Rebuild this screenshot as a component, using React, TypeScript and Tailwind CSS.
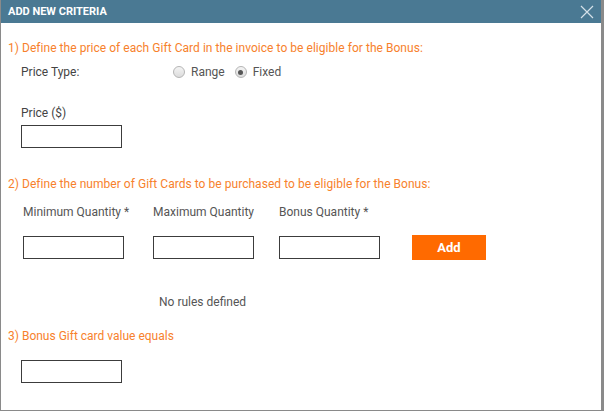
export default function App() {
  const font = { fontFamily: 'Roboto, "Liberation Sans", Arial, sans-serif' };

  const Radio = ({ checked }: { checked?: boolean }) => (
    <span className="inline-flex h-[12px] w-[12px] items-center justify-center rounded-full border border-[#b5b5b5] bg-gradient-to-b from-[#f4f4f4] to-[#dcdcdc]">
      {checked && <span className="h-[5px] w-[5px] rounded-full bg-[#555]" />}
    </span>
  );

  const Input = ({ w = 'w-[101px]' }: { w?: string }) => (
    <input className={`${w} h-[23px] border border-[#3c3c3c] bg-white outline-none`} />
  );

  return (
    <div className="h-[411px] w-[604px] bg-white text-[12px] leading-[16px]" style={font}>
      <div className="flex h-[411px] flex-col border-b border-l border-r-[3px] border-[#8a8a8a]">
        <div className="flex h-[23px] shrink-0 items-center justify-between bg-[#4a7993] pl-[7px] pr-[6px]">
          <span className="text-[11px] font-bold text-white">ADD NEW CRITERIA</span>
          <svg width="14" height="14" viewBox="0 0 14 14" className="mr-[1px]">
            <path d="M1 1 L13 13 M13 1 L1 13" stroke="#d4e0e8" strokeWidth="1.2" />
          </svg>
        </div>

        <div className="pl-[7px] pr-2">
          <div className="mt-[17px] text-[#f7812c] tracking-[0.04px]">
            1) Define the price of each Gift Card in the invoice to be eligible for the Bonus:
          </div>

          <div className="mt-[8px] flex items-center pl-[13px] text-[#444]">
            <span className="w-[152px]">Price Type:</span>
            <label className="flex items-center gap-[6px]">
              <Radio />
              <span className="text-[#555]">Range</span>
            </label>
            <label className="ml-[10px] flex items-center gap-[6px]">
              <Radio checked />
              <span className="text-[#555]">Fixed</span>
            </label>
          </div>

          <div className="mt-[25px] pl-[13px] text-[#444]">Price ($)</div>
          <div className="mt-[4px] pl-[13px]">
            <Input />
          </div>

          <div className="mt-[28px] text-[#f7812c] tracking-[0.04px]">
            2) Define the number of Gift Cards to be purchased to be eligible for the Bonus:
          </div>

          <div className="mt-[12px] flex pl-[15px] text-[#555]">
            <span className="w-[130px]">Minimum Quantity *</span>
            <span className="w-[126px]">Maximum Quantity</span>
            <span>Bonus Quantity *</span>
          </div>

          <div className="mt-[15px] flex items-center pl-[15px]">
            <Input />
            <span className="w-[29px]" />
            <Input />
            <span className="w-[25px]" />
            <Input />
            <button className="ml-[32px] h-[25px] w-[74px] bg-[#ff6a00] text-[13px] font-bold text-white">
              Add
            </button>
          </div>

          <div className="mt-[34px] pl-[151px] text-[#555]">No rules defined</div>

          <div className="mt-[18px] text-[#f7812c]">3) Bonus Gift card value equals</div>
          <div className="mt-[16px] pl-[13px]">
            <Input />
          </div>
        </div>
      </div>
    </div>
  );
}
